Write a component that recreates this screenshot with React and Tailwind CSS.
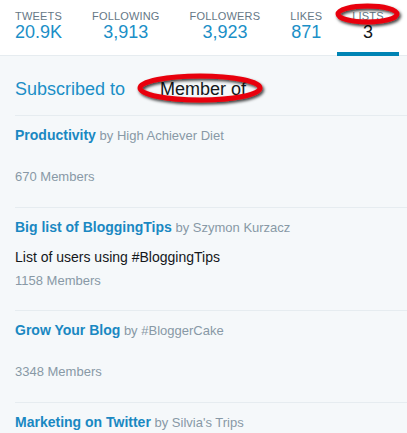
import React from "react";

const stats = [
  { label: "TWEETS", value: "20.9K" },
  { label: "FOLLOWING", value: "3,913" },
  { label: "FOLLOWERS", value: "3,923" },
  { label: "LIKES", value: "871" },
  { label: "LISTS", value: "3", active: true },
];

const lists = [
  { title: "Productivity", by: "High Achiever Diet", members: "670 Members" },
  {
    title: "Big list of BloggingTips",
    by: "Szymon Kurzacz",
    desc: "List of users using #BloggingTips",
    members: "1158 Members",
  },
  { title: "Grow Your Blog", by: "#BloggerCake", members: "3348 Members" },
  { title: "Marketing on Twitter", by: "Silvia's Trips", members: "" },
];

function Ellipse({ className, w, h }) {
  return (
    <svg
      className={className}
      width={w}
      height={h}
      viewBox={`0 0 ${w} ${h}`}
      style={{ overflow: "visible" }}
    >
      <defs>
        <filter id={`sh${w}`} x="-20%" y="-50%" width="140%" height="200%">
          <feDropShadow dx="1.5" dy="2" stdDeviation="1.5" floodColor="#000" floodOpacity="0.75" />
        </filter>
      </defs>
      <ellipse
        cx={w / 2}
        cy={h / 2}
        rx={w / 2 - 3}
        ry={h / 2 - 3}
        fill="none"
        stroke="#e8000b"
        strokeWidth="5"
        filter={`url(#sh${w})`}
      />
    </svg>
  );
}

export default function App() {
  return (
    <div
      className="w-[407px] h-[433px] overflow-hidden bg-[#f5f8fa] relative"
      style={{ fontFamily: '"Liberation Sans", Arial, sans-serif' }}
    >
      <div className="h-[56px] bg-white border-b border-[#e6ecf0] flex">
        {stats.map((s) => (
          <div key={s.label} className="relative px-[15px] pt-[9px] text-center">
            <div className="text-[11px] leading-[14px] tracking-[0.17px] text-[#657786]">{s.label}</div>
            <div
              className={`text-[18px] leading-[18px] ${
                s.active ? "text-[#14171a]" : "text-[#1b8fc7]"
              }`}
            >
              {s.value}
            </div>
            {s.active && (
              <div className="absolute left-0 right-0 top-[52px] h-[4px] bg-[#0084b4]" />
            )}
          </div>
        ))}
      </div>

      <div className="pl-[15px] pt-[21px] pb-[14px] flex text-[18px] leading-[24px]">
        <span className="text-[#1b8fc7]">Subscribed to</span>
        <span className="ml-[35px] text-[#14171a]">Member of</span>
      </div>

      <div className="pl-[15px]">
        {lists.map((l) => (
          <div
            key={l.title}
            className={`border-t border-[#e6ecf0] pt-[9px] ${l.desc ? "pb-[20px]" : "pb-[21px]"}`}
          >
            <div className="leading-[20px]">
              <span className="text-[14px] font-bold text-[#1a88c2]">{l.title}</span>
              <span className="text-[13px] text-[#8899a6]"> by {l.by}</span>
            </div>
            {l.desc && (
              <div className="mt-[9px] text-[14px] leading-[20px] text-[#14171a]">{l.desc}</div>
            )}
            {l.members && (
              <div
                className={`${l.desc ? "mt-[5px]" : "mt-[22px]"} text-[13px] leading-[18px] text-[#8899a6]`}
              >
                {l.members}
              </div>
            )}
          </div>
        ))}
      </div>

      <Ellipse className="absolute left-[137px] top-[73px]" w={126} h={30} />
      <Ellipse className="absolute left-[335px] top-[3px]" w={65} h={22} />
    </div>
  );
}
